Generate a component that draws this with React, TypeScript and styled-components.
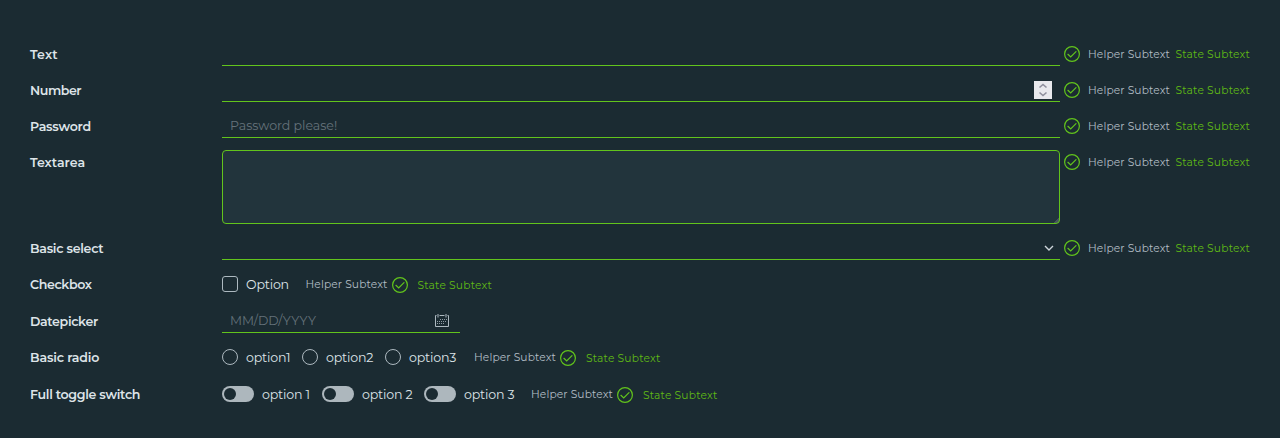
import React from 'react';
import styled, { createGlobalStyle } from 'styled-components';

const Global = createGlobalStyle`
  * { box-sizing: border-box; }
  body {
    margin: 0;
    background: #1b2b32;
    color: #dee4e8;
    font-family: Metropolis, Montserrat, Inter, "Liberation Sans", sans-serif;
    font-size: 12.6px;
  }
`;

const Form = styled.form`
  display: flex;
  flex-direction: column;
  height: 438px;
  padding: 42px 30px 0;
  overflow: hidden;
`;

const Row = styled.div<{ $h?: number; $gap?: number }>`
  display: grid;
  grid-template-columns: 192px 1fr;
  flex: none;
  height: ${(p) => p.$h ?? 24}px;
  margin-bottom: ${(p) => p.$gap ?? 12}px;
`;

const Label = styled.label<{ $ls?: number }>`
  font-weight: 600;
  height: 24px;
  line-height: 25px;
  white-space: nowrap;
  letter-spacing: ${(p) => p.$ls ?? 0}px;
`;

const Wide = styled.div`
  display: grid;
  grid-template-columns: 838px 1fr;
  column-gap: 4px;
`;

const Inline = styled.div`
  display: flex;
  align-items: flex-start;
`;

const Field = styled.div<{ $w?: number; $end?: number }>`
  display: flex;
  align-items: center;
  justify-content: space-between;
  width: ${(p) => (p.$w ? `${p.$w}px` : 'auto')};
  height: 24px;
  padding: 0 ${(p) => p.$end ?? 8}px 0 8px;
  border-bottom: 1px solid #62c41c;
`;

const Input = styled.input<{ $ls?: number }>`
  flex: 1;
  min-width: 0;
  height: 23px;
  padding: 0;
  border: 0;
  outline: 0;
  background: transparent;
  color: #e9ecef;
  font: inherit;
  letter-spacing: ${(p) => p.$ls ?? 0}px;
  &::placeholder { color: #65727a; opacity: 1; }
`;

const Area = styled.textarea`
  display: block;
  width: 838px;
  height: 74px;
  border: 1px solid #62c41c;
  border-radius: 4px;
  outline: 0;
  resize: none;
  background: linear-gradient(135deg, transparent 50%, #46555c 50%) right bottom / 6px 6px no-repeat #22343c;
  color: #e9ecef;
`;

const Spinner = styled.span`
  display: flex;
  width: 18px;
  height: 18px;
  background: #e9e9ed;
`;

const Messages = styled.div<{ $inline?: boolean }>`
  display: flex;
  height: 24px;
  margin-left: ${(p) => (p.$inline ? 18 : 0)}px;
  font-size: 10.7px;
  line-height: 26px;
  white-space: nowrap;
`;

const Check = styled.svg<{ $inline?: boolean }>`
  flex: none;
  width: 16px;
  height: 16px;
  margin: ${(p) => (p.$inline ? '5px 10px 0 4px' : '4px 8px 0 0')};
  fill: none;
  stroke: #62c41c;
`;

const Helper = styled.span<{ $inline?: boolean }>`
  width: ${(p) => (p.$inline ? 82 : 87.5)}px;
  letter-spacing: 0.12px;
  color: #b3bec5;
`;

const State = styled.span<{ $inline?: boolean }>`
  width: 76px;
  letter-spacing: 0.2px;
  line-height: ${(p) => (p.$inline ? 28 : 26)}px;
  color: #60bb15;
`;

const Choice = styled.label<{ $w: number }>`
  display: flex;
  flex: none;
  gap: 8px;
  width: ${(p) => p.$w}px;
  height: 24px;
  line-height: 25px;
  white-space: nowrap;
  letter-spacing: -0.18px;
`;

const Box = styled.span<{ $round?: boolean }>`
  flex: none;
  width: 16px;
  height: 16px;
  margin-top: 4px;
  border: 1px solid #adb9c0;
  border-radius: ${(p) => (p.$round ? '50%' : '3px')};
`;

const Toggle = styled.span`
  flex: none;
  width: 32px;
  height: 16px;
  margin-top: 4px;
  padding: 2px;
  border-radius: 8px;
  background: #adb7bd;
  &::before {
    content: '';
    display: block;
    width: 12px;
    height: 12px;
    border-radius: 50%;
    background: #1b2b32;
  }
`;

const CheckIcon = ({ inline }: { inline?: boolean }) => (
  <Check $inline={inline} viewBox="0 0 16 16">
    <circle cx="8" cy="8" r="7.4" strokeWidth="1.2" />
    <path d="M3.9 8.3 6.7 11 12 5.7" strokeWidth="1.2" strokeLinecap="round" />
  </Check>
);

const Feedback = () => (
  <Messages>
    <CheckIcon />
    <Helper>Helper Subtext</Helper>
    <State>State Subtext</State>
  </Messages>
);

const InlineFeedback = () => (
  <Messages $inline>
    <Helper $inline>Helper Subtext</Helper>
    <CheckIcon inline />
    <State $inline>State Subtext</State>
  </Messages>
);

const Calendar = () => (
  <svg width="16" height="16" viewBox="0 0 16 16" fill="none" stroke="#adb9c0">
    <path d="M2.5 2.5h-1v11h13v-11h-1M5.5 2.5h5" />
    <path d="M4 1v3.5M12 1v3.5" />
    <path d="M6 6.5h7M3 8.5h10M3 10.5h8" strokeDasharray="1 1" strokeOpacity="0.8" />
  </svg>
);

export default function App() {
  return (
    <>
      <Global />
      <Form>
        <Row>
          <Label $ls={0.2}>Text</Label>
          <Wide><Field><Input /></Field><Feedback /></Wide>
        </Row>
        <Row>
          <Label $ls={-0.45}>Number</Label>
          <Wide>
            <Field>
              <Input />
              <Spinner>
                <svg width="18" height="18" viewBox="0 0 18 18" fill="none" stroke="#8f8f9d" strokeWidth="1.6">
                  <path d="M5.5 6.5 9 3.5l3.5 3M5.5 11.5l3.5 3 3.5-3" />
                </svg>
              </Spinner>
            </Field>
            <Feedback />
          </Wide>
        </Row>
        <Row>
          <Label $ls={-0.24}>Password</Label>
          <Wide><Field><Input type="password" placeholder="Password please!" $ls={-0.04} /></Field><Feedback /></Wide>
        </Row>
        <Row $h={74}>
          <Label $ls={0.02}>Textarea</Label>
          <Wide><Area /><Feedback /></Wide>
        </Row>
        <Row>
          <Label $ls={-0.28}>Basic select</Label>
          <Wide>
            <Field $end={6}>
              <Input />
              <svg width="10" height="8" viewBox="0 0 10 8" fill="none" stroke="#ced6db" strokeWidth="1.4">
                <path d="M1 2l4 4 4-4" />
              </svg>
            </Field>
            <Feedback />
          </Wide>
        </Row>
        <Row $gap={13}>
          <Label $ls={-0.37}>Checkbox</Label>
          <Inline>
            <Choice $w={65.5}><Box />Option</Choice>
            <InlineFeedback />
          </Inline>
        </Row>
        <Row>
          <Label $ls={-0.35}>Datepicker</Label>
          <Inline><Field $w={238} $end={10}><Input placeholder="MM/DD/YYYY" $ls={-0.1} /><Calendar /></Field></Inline>
        </Row>
        <Row $gap={13}>
          <Label $ls={-0.16}>Basic radio</Label>
          <Inline>
            <Choice $w={80}><Box $round />option1</Choice>
            <Choice $w={83}><Box $round />option2</Choice>
            <Choice $w={71}><Box $round />option3</Choice>
            <InlineFeedback />
          </Inline>
        </Row>
        <Row>
          <Label $ls={-0.29}>Full toggle switch</Label>
          <Inline>
            <Choice $w={100}><Toggle />option 1</Choice>
            <Choice $w={102}><Toggle />option 2</Choice>
            <Choice $w={89}><Toggle />option 3</Choice>
            <InlineFeedback />
          </Inline>
        </Row>
      </Form>
    </>
  );
}
